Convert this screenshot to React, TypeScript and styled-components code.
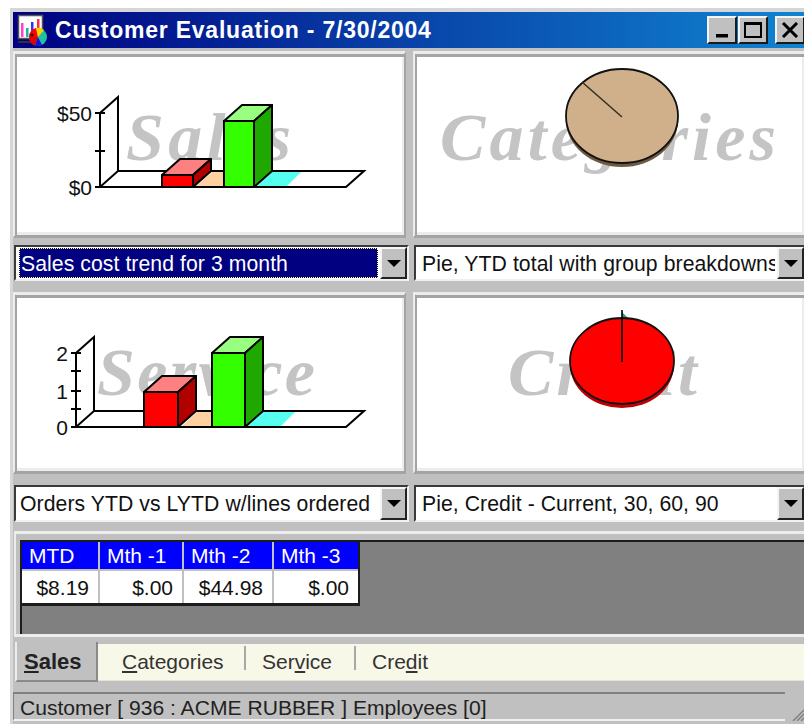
import * as React from 'react'
import styled, { createGlobalStyle } from 'styled-components'

const GlobalStyle = createGlobalStyle`
	html, body {
		margin: 0;
		padding: 0;
		width: 804px;
		height: 724px;
		overflow: hidden;
		background: #ffffff;
		font-family: 'Liberation Sans', Arial, sans-serif;
	}
`

const Desktop = styled.div`
	width: 804px;
	height: 724px;
	padding: 8px 0 0 10px;
	box-sizing: border-box;
	overflow: hidden;
`

const Window = styled.div`
	width: 794px;
	height: 716px;
	box-sizing: border-box;
	background: #c0c0c0;
	border-top: 4px solid #d6d6d6;
	border-left: 3px solid #d6d6d6;
	display: flex;
	flex-direction: column;
`

const TitleBar = styled.div`
	height: 36px;
	flex: none;
	display: flex;
	align-items: center;
	background: linear-gradient(90deg, #000080 0%, #1084d0 100%);
	overflow: hidden;
`

const AppIcon = styled.svg`
	margin: 0 7px 0 4px;
	flex: none;
`

const TitleText = styled.span`
	color: #ffffff;
	font-size: 23px;
	font-weight: 700;
	letter-spacing: 0.77px;
	white-space: nowrap;
	flex: 1;
`

const CaptionButtons = styled.div`
	display: flex;
	margin-right: -1px;
`

const CaptionButton = styled.div<{ $gap?: number }>`
	width: 30px;
	height: 28px;
	box-sizing: border-box;
	margin-left: ${(props) => props.$gap ?? 0}px;
	background: #c0c0c0;
	border-style: solid;
	border-width: 2px;
	border-color: #f4f4f4 #1a1a1a #1a1a1a #f4f4f4;
	display: flex;
	align-items: center;
	justify-content: center;
`

const ChartRow = styled.div<{ $top: number; $height: number }>`
	flex: none;
	margin-top: ${(props) => props.$top}px;
	height: ${(props) => props.$height}px;
	display: grid;
	grid-template-columns: 393px 393px;
	column-gap: 7px;
`

const ChartFrame = styled.div`
	box-sizing: border-box;
	border-style: solid;
	border-width: 3px 2px;
	border-color: #ececec #a4a4a4 #a4a4a4 #ececec;
	box-shadow: inset 2px 3px 0 #a4a4a4, inset -2px -3px 0 #ececec;
	padding: 3px 2px;
	background: #ffffff;
	overflow: hidden;
`

const ChartSvg = styled.svg`
	display: block;
`

const ComboRow = styled.div<{ $top: number }>`
	flex: none;
	margin-top: ${(props) => props.$top}px;
	margin-left: 1px;
	display: grid;
	grid-template-columns: 395px 392px;
	column-gap: 5px;
`

const Combo = styled.div<{ $height: number }>`
	height: ${(props) => props.$height}px;
	box-sizing: border-box;
	border-style: solid;
	border-width: 2px;
	border-color: #3a3a3a #f0f0f0 #f0f0f0 #3a3a3a;
	background: #ffffff;
	display: flex;
	align-items: stretch;
`

const ComboValue = styled.div<{ $selected?: boolean; $inset: number }>`
	flex: 1;
	min-width: 0;
	margin: 1px 2px 1px 3px;
	padding-left: ${(props) => props.$inset}px;
	font-size: 21.2px;
	letter-spacing: 0.07px;
	line-height: 32px;
	white-space: nowrap;
	overflow: hidden;
	color: ${(props) => (props.$selected ? '#ffffff' : '#111111')};
	background: ${(props) => (props.$selected ? '#000080' : 'transparent')};
	outline: ${(props) => (props.$selected ? '1px dotted #ffff80' : 'none')};
	outline-offset: -1px;
`

const ComboButton = styled.div`
	flex: none;
	width: 27px;
	box-sizing: border-box;
	background: #c0c0c0;
	border-style: solid;
	border-width: 2px;
	border-color: #f4f4f4 #222222 #222222 #f4f4f4;
	display: flex;
	align-items: center;
	justify-content: center;
	&::after {
		content: '';
		border-style: solid;
		border-width: 7px 7px 0 7px;
		border-color: #000000 transparent transparent transparent;
	}
`

const GridFrame = styled.div`
	flex: none;
	margin-top: 9px;
	margin-left: 1px;
	height: 106px;
	box-sizing: border-box;
	border-top: 3px solid #ececec;
	border-left: 2px solid #ececec;
	border-bottom: 3px solid #ececec;
	padding: 6px 0 0 4px;
`

const GridViewport = styled.div`
	height: 100%;
	box-sizing: border-box;
	background: #808080;
	border-top: 2px solid #1c1c1c;
	border-left: 2px solid #1c1c1c;
`

const DataTable = styled.table`
	border-collapse: separate;
	border-spacing: 0;
	font-size: 21px;
	border-right: 2px solid #1c1c1c;
	border-bottom: 3px solid #1c1c1c;
`

const HeadCell = styled.th<{ $width: number }>`
	width: ${(props) => props.$width}px;
	height: 29px;
	box-sizing: border-box;
	padding: 1px 0 0 7px;
	background: #0000ff;
	color: #ffffff;
	font-weight: 400;
	text-align: left;
	border-right: 2px solid #c0c0c0;
	border-bottom: 2px solid #c0c0c0;
	&:last-child {
		border-right: none;
	}
`

const ValueCell = styled.td`
	height: 32px;
	box-sizing: border-box;
	padding: 1px 9px 0 0;
	background: #ffffff;
	color: #111111;
	text-align: right;
	border-right: 2px solid #c0c0c0;
	&:last-child {
		border-right: none;
	}
`

const TabRow = styled.div`
	flex: none;
	margin-top: 5px;
	margin-left: 2px;
	height: 40px;
	display: flex;
`

const ActiveTab = styled.div`
	width: 83px;
	box-sizing: border-box;
	padding-left: 7px;
	border-left: 2px solid #ececec;
	border-bottom: 2px solid #8a8a8a;
	border-right: 2px solid #8a8a8a;
	font-size: 22px;
	font-weight: 700;
	line-height: 40px;
	color: #222222;
`

const TabStrip = styled.div`
	flex: 1;
	margin: 2px 0 1px;
	background: #f8f8e8;
	display: flex;
	align-items: center;
	font-size: 21px;
	color: #333333;
	border-bottom: 1px solid #e4e4d4;
`

const TabLabel = styled.span<{ $width: number; $inset: number }>`
	width: ${(props) => props.$width}px;
	flex: none;
	padding-left: ${(props) => props.$inset}px;
	box-sizing: border-box;
	white-space: nowrap;
`

const TabDivider = styled.span`
	flex: none;
	width: 2px;
	height: 24px;
	align-self: flex-start;
	margin-top: 2px;
	background: #a8a8a8;
`

const StatusRow = styled.div`
	flex: none;
	margin-top: 10px;
	height: 29px;
	display: flex;
	align-items: flex-end;
`

const StatusPane = styled.div`
	flex: 1;
	height: 29px;
	box-sizing: border-box;
	border-top: 2px solid #808080;
	border-left: 1px solid #808080;
	border-bottom: 2px solid #f0f0f0;
	padding-left: 6px;
	font-size: 21.1px;
	line-height: 27px;
	color: #222222;
	white-space: nowrap;
`

const SizeGrip = styled.svg`
	flex: none;
	display: block;
`

type BarSpec = {
	x: number
	width: number
	top: number
	fill: string
	topFill: string
	sideFill: string
}

type FloorSpec = {
	points: string
	fill: string
}

type TickSpec = {
	y: number
	label?: string
}

type BarChartProps = {
	viewBox: string
	width: number
	height: number
	title: string
	titleX: number
	titleWidth: number
	titleY: number
	axisX: number
	axisTop: number
	baseY: number
	labelX: number
	ticks: TickSpec[]
	floors: FloorSpec[]
	bars: BarSpec[]
}

const DX = 18
const DY = -16

// floor colours first, then the walls and ticks, then the solid bars on top
const BarChart = ({
	viewBox,
	width,
	height,
	title,
	titleX,
	titleWidth,
	titleY,
	axisX,
	axisTop,
	baseY,
	labelX,
	ticks,
	floors,
	bars,
}: BarChartProps) => (
	<ChartSvg viewBox={viewBox} width={width} height={height}>
		<text
			x={titleX}
			y={titleY}
			textLength={titleWidth}
			lengthAdjust='spacing'
			fontFamily="'Liberation Serif', serif"
			fontWeight='700'
			fontStyle='italic'
			fontSize='68'
			fill='#c4c4c4'
		>
			{title}
		</text>
		{floors.map((f) => (
			<polygon key={f.points} points={f.points} fill={f.fill} />
		))}
		<g fill='none' stroke='#000000' strokeWidth='2'>
			<path
				d={`M${axisX} ${axisTop} L${axisX + DX} ${axisTop + DY} L${axisX + DX} ${baseY + DY} L364 ${baseY + DY} L346 ${baseY} L${axisX} ${baseY} Z`}
			/>
			<path d={`M${axisX} ${baseY} L${axisX + DX} ${baseY + DY}`} />
			{ticks.map((t) => (
				<path key={t.y} d={`M${axisX - 5} ${t.y} L${axisX + 5} ${t.y}`} />
			))}
		</g>
		{ticks
			.filter((t) => t.label)
			.map((t) => (
				<text
					key={t.label}
					x={labelX}
					y={t.y + 8}
					textAnchor='end'
					fontFamily="'Liberation Sans', sans-serif"
					fontSize='21'
					fill='#111111'
				>
					{t.label}
				</text>
			))}
		{bars.map((b) => (
			<g key={b.x} stroke='#000000' strokeWidth='2' strokeLinejoin='round'>
				<polygon
					points={`${b.x},${b.top} ${b.x + b.width},${b.top} ${b.x + b.width + DX},${b.top + DY} ${b.x + DX},${b.top + DY}`}
					fill={b.topFill}
				/>
				<polygon
					points={`${b.x + b.width},${b.top} ${b.x + b.width + DX},${b.top + DY} ${b.x + b.width + DX},${baseY + DY} ${b.x + b.width},${baseY}`}
					fill={b.sideFill}
				/>
				<rect x={b.x} y={b.top} width={b.width} height={baseY - b.top} fill={b.fill} />
			</g>
		))}
	</ChartSvg>
)

type PieChartProps = {
	viewBox: string
	width: number
	height: number
	title: string
	titleX: number
	titleWidth: number
	titleY: number
	cx: number
	cy: number
	rx: number
	ry: number
	fill: string
	edge: string
	lineX: number
	lineY: number
	lineColor: string
	wedge?: boolean
}

const PieChart = ({
	viewBox,
	width,
	height,
	title,
	titleX,
	titleWidth,
	titleY,
	cx,
	cy,
	rx,
	ry,
	fill,
	edge,
	lineX,
	lineY,
	lineColor,
	wedge,
}: PieChartProps) => (
	<ChartSvg viewBox={viewBox} width={width} height={height}>
		<text
			x={titleX}
			y={titleY}
			textLength={titleWidth}
			lengthAdjust='spacing'
			fontFamily="'Liberation Serif', serif"
			fontWeight='700'
			fontStyle='italic'
			fontSize='68'
			fill='#c4c4c4'
		>
			{title}
		</text>
		{wedge && <polygon points={`${cx},${cy - ry - 6} ${cx + 7},${cy - ry + 1} ${cx},${cy - ry + 1}`} fill='#2a9d8f' />}
		<ellipse cx={cx} cy={cy + 4} rx={rx} ry={ry} fill={edge} />
		<ellipse cx={cx} cy={cy} rx={rx} ry={ry} fill={fill} stroke='#111111' strokeWidth='1.8' />
		<line x1={lineX} y1={lineY} x2={cx} y2={cy + 1} stroke={lineColor} strokeWidth='1.6' />
	</ChartSvg>
)

const months = [
	{ head: 'MTD', value: '$8.19', width: 78 },
	{ head: 'Mth -1', value: '$.00', width: 84 },
	{ head: 'Mth -2', value: '$44.98', width: 90 },
	{ head: 'Mth -3', value: '$.00', width: 84 },
]

const RED = { fill: '#ff0000', topFill: '#ff8080', sideFill: '#b00000' }
const GREEN = { fill: '#33ff00', topFill: '#99ff80', sideFill: '#1fa800' }
const TAN = '#ffd0a0'
const CYAN = '#55fff0'

const App = () => (
	<Desktop>
		<GlobalStyle />
		<Window>
			<TitleBar>
				<AppIcon width='31' height='32' viewBox='0 0 31 32'>
					<rect x='1.5' y='1.5' width='24' height='23' fill='#ffffff' stroke='#555555' strokeWidth='1.5' />
					<rect x='4' y='9' width='2.5' height='14' fill='#ff40d0' />
					<rect x='9' y='14' width='2.5' height='9' fill='#20b0a0' />
					<rect x='14' y='8' width='2.5' height='15' fill='#3030ff' />
					<rect x='20' y='5' width='2.5' height='15' fill='#ff3030' />
					<path d='M1 27 H14 V29 H1 Z' fill='#333333' />
					<circle cx='21' cy='23' r='9' fill='#20c0a0' />
					<path d='M21 23 L12 23 A9 9 0 0 1 19 14 Z' fill='#ff0000' />
					<path d='M21 23 L19 14 A9 9 0 0 1 27 16 Z' fill='#ffd000' />
					<path d='M21 23 L12 23 A9 9 0 0 0 18 31.5 Z' fill='#e00000' />
					<path d='M21 23 L18 31.5 A9 9 0 0 0 25 31 Z' fill='#1010e0' />
					<circle cx='15' cy='21' r='1.6' fill='#111111' />
				</AppIcon>
				<TitleText>Customer Evaluation - 7/30/2004</TitleText>
				<CaptionButtons>
					<CaptionButton>
						<svg width='14' height='18' viewBox='0 0 14 18'>
							<rect x='1' y='13' width='12' height='3.5' fill='#000000' />
						</svg>
					</CaptionButton>
					<CaptionButton $gap={1}>
						<svg width='20' height='18' viewBox='0 0 20 18'>
							<rect x='2' y='2' width='16' height='14' fill='none' stroke='#000000' strokeWidth='2' />
							<rect x='2' y='1' width='16' height='3' fill='#000000' />
						</svg>
					</CaptionButton>
					<CaptionButton $gap={7}>
						<svg width='18' height='16' viewBox='0 0 18 16'>
							<path d='M2 1 L16 15 M16 1 L2 15' stroke='#000000' strokeWidth='3' />
						</svg>
					</CaptionButton>
				</CaptionButtons>
			</TitleBar>

			<ChartRow $top={3} $height={187}>
				<ChartFrame>
					<BarChart
						viewBox='17 57 385 175'
						width={385}
						height={175}
						title='Sales'
						titleX={126}
						titleWidth={165}
						titleY={160}
						axisX={100}
						axisTop={113}
						baseY={187}
						labelX={92}
						ticks={[{ y: 113, label: '$50' }, { y: 151 }, { y: 187, label: '$0' }]}
						floors={[
							{ points: '195,187 212,172 224,172 224,187', fill: TAN },
							{ points: '256,187 272,172 301,172 286,187', fill: CYAN },
						]}
						bars={[
							{ x: 162, width: 31, top: 175, ...RED },
							{ x: 224, width: 30, top: 121, ...GREEN },
						]}
					/>
				</ChartFrame>
				<ChartFrame>
					<PieChart
						viewBox='417 57 385 175'
						width={385}
						height={175}
						title='Categories'
						titleX={440}
						titleWidth={336}
						titleY={160}
						cx={622}
						cy={116}
						rx={56}
						ry={47}
						fill='#d0b08a'
						edge='#6e5a40'
						lineX={582}
						lineY={82}
						lineColor='#3a2e20'
					/>
				</ChartFrame>
			</ChartRow>

			<ComboRow $top={7}>
				<Combo $height={36}>
					<ComboValue $selected $inset={2}>Sales cost trend for 3 month</ComboValue>
					<ComboButton />
				</Combo>
				<Combo $height={36}>
					<ComboValue $inset={3}>Pie, YTD total with group breakdowns</ComboValue>
					<ComboButton />
				</Combo>
			</ComboRow>

			<ChartRow $top={11} $height={182}>
				<ChartFrame>
					<BarChart
						viewBox='17 298 385 170'
						width={385}
						height={170}
						title='Service'
						titleX={97}
						titleWidth={218}
						titleY={395}
						axisX={76}
						axisTop={353}
						baseY={427}
						labelX={68}
						ticks={[{ y: 353, label: '2' }, { y: 371 }, { y: 391, label: '1' }, { y: 409 }, { y: 427, label: '0' }]}
						floors={[
							{ points: '181,427 197,412 212,412 212,427', fill: TAN },
							{ points: '247,427 262,412 295,412 280,427', fill: CYAN },
						]}
						bars={[
							{ x: 144, width: 34, top: 392, ...RED },
							{ x: 212, width: 33, top: 353, ...GREEN },
						]}
					/>
				</ChartFrame>
				<ChartFrame>
					<PieChart
						viewBox='417 298 385 170'
						width={385}
						height={170}
						title='Credit'
						titleX={508}
						titleWidth={189}
						titleY={395}
						cx={622}
						cy={361}
						rx={52}
						ry={43}
						fill='#ff0000'
						edge='#c00000'
						lineX={622}
						lineY={310}
						lineColor='#000000'
						wedge
					/>
				</ChartFrame>
			</ChartRow>

			<ComboRow $top={11}>
				<Combo $height={37}>
					<ComboValue $inset={1}>Orders YTD vs LYTD w/lines ordered</ComboValue>
					<ComboButton />
				</Combo>
				<Combo $height={37}>
					<ComboValue $inset={3}>Pie, Credit - Current, 30, 60, 90</ComboValue>
					<ComboButton />
				</Combo>
			</ComboRow>

			<GridFrame>
				<GridViewport>
					<DataTable>
						<thead>
							<tr>
								{months.map((m) => (
									<HeadCell key={m.head} $width={m.width}>
										{m.head}
									</HeadCell>
								))}
							</tr>
						</thead>
						<tbody>
							<tr>
								{months.map((m) => (
									<ValueCell key={m.head}>{m.value}</ValueCell>
								))}
							</tr>
						</tbody>
					</DataTable>
				</GridViewport>
			</GridFrame>

			<TabRow>
				<ActiveTab>
					<u>S</u>ales
				</ActiveTab>
				<TabStrip>
					<TabLabel $width={146} $inset={24}>
						<u>C</u>ategories
					</TabLabel>
					<TabDivider />
					<TabLabel $width={108} $inset={16}>
						Ser<u>v</u>ice
					</TabLabel>
					<TabDivider />
					<TabLabel $width={100} $inset={16}>
						Cre<u>d</u>it
					</TabLabel>
				</TabStrip>
			</TabRow>

			<StatusRow>
				<StatusPane>Customer [ 936 : ACME RUBBER ] Employees [0]</StatusPane>
				<SizeGrip width='19' height='14' viewBox='0 0 19 14'>
					<path d='M8 14 L19 3 M12 14 L19 7 M16 14 L19 11' stroke='#808080' strokeWidth='1.5' />
				</SizeGrip>
			</StatusRow>
		</Window>
	</Desktop>
)

export default App
